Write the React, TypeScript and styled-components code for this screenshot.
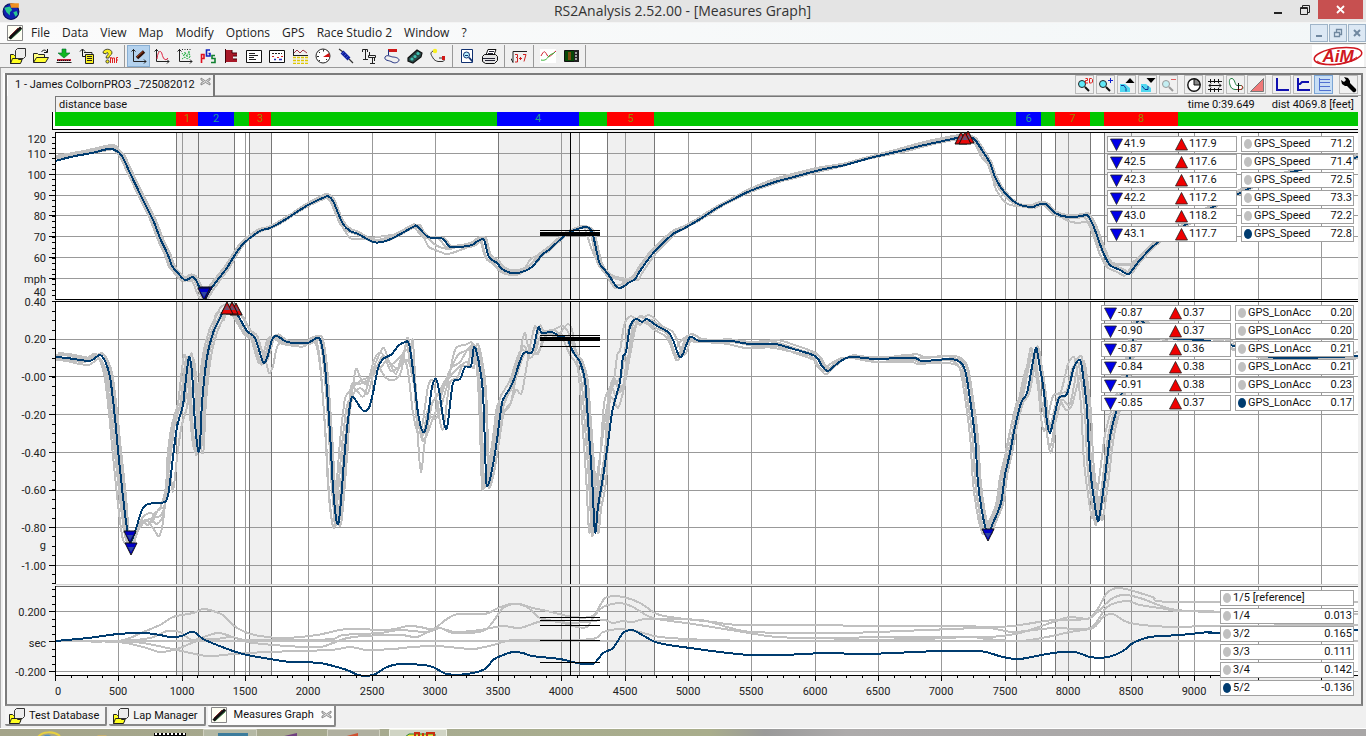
import React from "react";
import styled, { createGlobalStyle, css } from "styled-components";

const UI = `Roboto, "Liberation Sans", Arial, sans-serif`;
const SEGOE = `"Open Sans", "Noto Sans", sans-serif`;
const GREY = "#c0c0c0";
const NAVY = "#003c70";

const GlobalStyle = createGlobalStyle`
  *, *::before, *::after { box-sizing: border-box; }
  body { margin: 0; background: #f0f0f0; font: 11px/14px ${UI}; color: #111; }
  button { font: inherit; color: inherit; padding: 0; margin: 0; border: 0; background: none; }
  svg { display: block; flex: none; }
`;

/* ------------------------------------------------------------ data */

type Pt = [number, number];
const parse = (s: string): Pt[] =>
  s.trim().split(/\s+/).map((p) => p.split(",").map(Number) as Pt);

const X0 = 55;
const SPAN = 1303;
const pct = (x: number) => `${((x - X0) / SPAN) * 100}%`;

const speed = parse(`55,161 75,156 92,153 108,149 115,150 122,156 130,173 143,200 153,220 160,238 168,255
 172,266 177,272 185,280 193,277 197,282 202,294 205,298 210,290 223,273 227,268 233,258 243,244 260,231
 270,228 283,221 308,205 325,197 328,196 333,201 338,213 343,224 350,231 358,234 373,242 382,242 393,238
 413,227 417,226 428,237 441,238 445,241 450,247 460,247 472,245 478,241 484,240 489,257 497,263 502,269
 512,273 522,272 532,267 542,255 550,249 563,237 570,232 585,227 590,229 593,235 597,253 600,264 608,274
 617,287 623,287 628,283 635,279 640,271 650,257 657,249 673,234 683,229 697,221 717,208 730,201 750,191
 775,182 790,178 820,170 845,165 870,158 900,151 920,146 943,141 963,137 973,138 978,144 990,163 995,177
 1005,193 1018,204 1033,207 1037,205 1046,204 1055,213 1068,217 1082,216 1087,215 1093,225 1103,252
 1110,265 1120,270 1127,274 1130,273 1140,260 1158,242 1187,224 1213,207 1238,194 1267,180 1300,170 1358,157`);

const accel = parse(`55,357 67,358 80,360 90,361 95,358 100,355 105,361 110,377 115,418 118,450 123,497 128,535
 131,542 135,532 142,510 148,504 160,503 166,501 169,490 173,457 177,427 183,405 185,387 189,357 192,373
 195,423 198,450 200,445 202,403 207,357 213,333 220,318 224,310 230,307 237,314 247,331 255,338 263,362
 267,358 272,340 277,336 287,342 300,343 308,343 317,338 321,342 325,367 330,433 333,487 337,523 340,512
 345,449 350,405 353,397 360,407 364,411 369,408 373,393 378,368 383,359 392,354 398,346 405,342 409,344
 413,370 418,413 423,432 427,423 432,387 436,379 439,390 443,417 446,429 448,422 453,383 460,379 465,367
 471,366 474,347 478,358 483,393 486,477 488,485 492,470 497,440 502,403 507,393 513,382 523,354 532,352
 537,332 539,327 542,333 552,332 560,337 567,338 570,345 575,355 580,362 585,380 588,420 592,477 595,532
 598,507 603,477 607,450 612,413 617,393 620,382 623,357 626,352 630,327 636,319 642,322 647,319 657,326
 668,332 673,340 679,356 683,354 690,337 700,341 730,341 750,344 775,344 790,348 815,356 822,366 828,371
 838,363 850,357 875,359 900,358 915,358 923,361 950,359 960,362 965,370 969,392 975,437 978,483 983,517
 988,534 993,523 1001,503 1005,475 1010,453 1015,427 1021,403 1027,393 1032,367 1036,348 1039,362 1044,392
 1047,422 1050,433 1053,422 1059,398 1067,394 1074,367 1080,360 1083,375 1087,410 1090,467 1097,518
 1100,513 1105,477 1110,437 1116,412 1127,375 1137,322 1150,328 1170,338 1200,340 1230,345 1270,357
 1300,358 1358,356`);

const deltaNavy = parse(`55,641 88,638 118,634 143,633 160,635 170,637 182,636 190,632 196,633 203,639 217,645
 233,651 247,655 270,659 290,662 320,663 347,670 358,675 373,675 387,667 400,664 423,665 433,667 447,674
 467,674 485,669 493,660 503,655 513,652 523,653 532,656 560,659 577,663 593,664 603,653 613,648 623,633
 630,630 635,631 653,641 663,644 690,648 720,652 750,655 783,655 827,653 867,654 940,651 980,651 1003,657
 1020,659 1053,653 1075,652 1090,657 1108,657 1123,651 1133,643 1150,637 1180,635 1210,632 1220,633 1358,630`);

const deltaGrey = [
  `55,641 118,641 143,632 160,625 173,617 193,613 203,609 213,611 223,615 233,625 245,632 260,636 283,638
   317,635 347,629 387,630 408,626 420,627 433,629 447,619 458,614 485,614 498,608 510,604 520,604 533,608
   547,611 573,617 593,616 602,602 607,597 623,597 640,603 657,614 677,618 713,622 740,625 827,625 860,626
   960,626 987,627 1013,626 1053,620 1087,619 1097,610 1107,593 1117,588 1130,590 1153,597 1173,602 1358,602`,
  `55,641 118,641 150,638 167,631 180,632 193,640 217,633 233,637 247,640 300,640 333,639 343,635 380,633
   400,630 427,632 440,628 453,633 485,630 503,608 515,604 527,607 540,618 560,622 577,627 587,627 593,618
   603,607 620,603 633,607 653,618 693,624 743,632 777,637 827,638 893,637 987,637 1020,633 1053,622
   1070,617 1090,618 1110,600 1123,595 1140,598 1167,608 1187,611 1220,612 1358,614`,
  `55,641 118,642 143,647 160,652 177,649 200,640 217,639 233,637 247,642 287,646 320,647 333,643 353,637
   400,635 417,637 437,628 455,632 480,630 503,626 520,628 543,621 573,623 603,620 613,623 623,621 633,622
   647,619 700,620 727,627 753,632 843,633 927,630 987,628 1013,632 1053,628 1090,628 1107,607 1127,601
   1140,605 1167,609 1187,611 1358,614`,
  `55,641 118,641 143,643 177,650 207,656 233,654 267,652 330,650 350,647 367,650 393,649 413,647 437,646
   470,649 480,648 493,645 513,640 553,640 593,639 603,632 620,629 640,632 660,637 710,640 793,641 920,639
   970,637 987,639 1020,641 1047,637 1070,632 1093,628 1103,617 1113,614 1130,623 1173,627 1210,626 1358,625`,
  `55,641 1358,641`,
].map(parse);

/* Shift a trace along x and y, with a slow wobble so laps drift apart. */
const drift = (base: Pt[], dx: number, dy: number, seed: number, amp: number): Pt[] =>
  base.map(([x, y]) => [
    x + dx * (0.7 + 0.3 * Math.sin(x / 37 + seed)),
    y + dy + amp * Math.sin(x / 23 + seed * 2),
  ]);

/* Replace the stretches of a trace that a lap drove differently. */
const patch = (base: Pt[], ...parts: string[]): Pt[] =>
  parts.reduce((acc, s) => {
    const p = parse(s);
    const a = p[0][0] - 2;
    const b = p[p.length - 1][0] + 2;
    return [...acc.filter(([x]) => x < a), ...p, ...acc.filter(([x]) => x > b)];
  }, base);

const speedGrey = [
  patch(drift(speed, -3, 0, 0, 1), "50,157 80,152 112,145 120,152 128,172", "424,238 429,247 438,251 447,254 458,251",
    "586,232 592,250 598,262 608,275 617,279 626,281 636,279", "1110,262 1120,264 1130,264 1138,258"),
  patch(drift(speed, 2, -1, 1, 1), "50,158 80,154 113,147 121,154", "610,274 620,278 628,280", "1110,264 1122,265 1132,265"),
  patch(drift(speed, -4, 1, 2, 1), "50,159 82,153 109,147 116,152", "350,238 360,239 372,238 384,236 398,234",
    "525,268 530,260 536,256 548,252", "975,144 982,158 990,166 995,187 1003,200 1010,205 1020,206"),
  patch(drift(speed, 3, 0, 3, 1), "50,159 80,155 114,149", "424,232 434,244 448,249 460,246", "620,278 630,279"),
  patch(drift(speed, -2, -2, 4, 1), "50,157 84,151 114,146", "1066,220 1078,223 1088,222 1094,234 1100,254 1108,265"),
];

const accelGrey = [
  patch(drift(accel, -5, 2, 0, 2), "130,545 138,529 146,520 153,528 159,536 163,522 168,470 175,414",
    "214,325 216,314 221,313 224,320", "352,392 356,369 361,379 366,384 372,372 383,348 390,364 397,360 404,352",
    "414,382 418,440 421,473 425,440 430,418 437,417 447,386 455,350 465,345 474,346",
    "502,413 510,405 515,382 524,334 528,346 533,354 538,352 544,340", "600,460 604,404 610,388 617,382 622,372",
    "1045,420 1050,452 1054,440 1058,400 1066,410 1072,405 1078,382"),
  patch(drift(accel, 3, -2, 1, 2), "130,545 140,527 150,519 157,524 164,512 170,460 177,412",
    "258,342 265,358 269,373 273,366 278,345", "352,398 360,388 368,393 376,366 386,378 394,380 401,372 407,338 411,352",
    "414,376 420,430 424,441 432,421 440,400 450,370 460,362 470,347",
    "504,412 510,404 516,390 522,392 530,350 538,354 544,338 562,326 570,336", "610,400 618,408 624,388 632,345 638,318",
    "670,338 674,350 682,340 692,334 704,340"),
  patch(drift(accel, -3, 1, 2, 3), "130,546 140,522 148,525 154,514 160,508 166,487 172,440",
    "352,384 360,384 370,378 378,364 384,356 391,371 400,366 406,360 410,365",
    "415,390 422,436 428,410 438,394 448,375 458,355 468,350", "505,402 512,380 523,346 530,358 536,350",
    "608,398 614,378 620,392 626,372", "1020,395 1025,372 1032,360 1036,362 1041,400"),
  patch(drift(accel, 4, 0, 3, 2), "131,548 141,520 150,513 158,517 164,509 170,475", "352,390 364,396 374,360 381,353 392,365 399,368 405,350 410,352",
    "418,420 425,439 432,404 442,390 452,374 466,362", "610,390 616,396 621,386", "1046,424 1050,447 1056,420 1062,400 1070,404"),
  patch(drift(accel, -6, -1, 4, 2), "130,540 138,526 145,520 152,522 158,510 165,503", "354,386 362,380 372,376 382,366 388,360 396,374 402,356",
    "553,335 560,333 568,324 573,334"),
];

/* Catmull-Rom spline through the samples. */
const spline = (p: Pt[]) => {
  let d = `M${p[0][0]} ${p[0][1]}`;
  for (let i = 0; i < p.length - 1; i++) {
    const a = p[i - 1] || p[i];
    const b = p[i];
    const c = p[i + 1];
    const e = p[i + 2] || c;
    const n = (v: number) => v.toFixed(1);
    d += `C${n(b[0] + (c[0] - a[0]) / 7)} ${n(b[1] + (c[1] - a[1]) / 7)} ${n(c[0] - (e[0] - b[0]) / 7)} ${n(
      c[1] - (e[1] - b[1]) / 7
    )} ${c[0]} ${c[1]}`;
  }
  return d;
};

const bands: Pt[] = [[176, 198], [198, 234], [249, 271], [498, 579], [607, 654], [1016, 1041], [1055, 1090], [1104, 1178]];
const gridX = Array.from({ length: 20 }, (_, i) => Math.round(X0 + (i + 1) * 63.3));

const segments: { w: number; kind: "g" | "r" | "b"; n?: number }[] = [
  { w: 121, kind: "g" }, { w: 22, kind: "r", n: 1 }, { w: 36, kind: "b", n: 2 }, { w: 15, kind: "g" },
  { w: 22, kind: "r", n: 3 }, { w: 226, kind: "g" }, { w: 82, kind: "b", n: 4 }, { w: 28, kind: "g" },
  { w: 47, kind: "r", n: 5 }, { w: 362, kind: "g" }, { w: 25, kind: "b", n: 6 }, { w: 14, kind: "g" },
  { w: 35, kind: "r", n: 7 }, { w: 14, kind: "g" }, { w: 74, kind: "r", n: 8 }, { w: 180, kind: "g" },
];

/* ------------------------------------------------------------ icons */

const Icon = ({ children, w = 16, h = 16, box = "0 0 16 16" }: { children: React.ReactNode; w?: number; h?: number; box?: string }) => (
  <svg width={w} height={h} viewBox={box} fill="none" aria-hidden="true">{children}</svg>
);

const Pages = () => (
  <Icon>
    <path d="M.5 6.500h3l1 1h7v6l-2 2h-9z" fill="#ffff20" stroke="#222" />
    <path d="M5.500 2.500l2-2h8v8l-2 2h-8z" fill="#ececec" stroke="#333" />
    <path d="M.5 15.500l2-5h5l1 1h3l1-1-2 5z" fill="#ffff20" stroke="#222" />
  </Icon>
);

const Pen = () => (
  <Icon>
    <path d="M.5 .5h15v15H.5z" fill="#fffff4" stroke="#888" />
    <path d="M4 14L14.500 4.500" stroke="#3a9a4a" />
    <path d="M3 11L11 3" stroke="#a33" />
    <path d="M3.500 12.500L13 3.500" stroke="#111" strokeWidth="3" strokeLinecap="square" />
  </Icon>
);

const axes = <path d="M2.500 1v12.500H15M.5 3.500l2-2 2 2M13 11.500l2 2-2 2" stroke="#222" />;

const toolIcons: Record<string, React.ReactNode> = {
  "Open pages": <Pages />,
  "Open folder": (
    <Icon><path d="M.5 14.500v-9h4l1 1h6v3" fill="#ffff80" stroke="#222" /><path d="M.5 14.500l3-5h12l-3 5z" fill="#ffff30" stroke="#222" /><path d="M8.500 4c1-2 4-3 5.500 0M14.500 1v3.500H11" stroke="#111" /></Icon>
  ),
  Download: (
    <Icon><path d="M6 1h4v4h4L8 10 2 5h4z" fill="#10b820" stroke="#063" strokeWidth=".6" /><path d="M1 11h14v2H1z" fill="#c02038" /><path d="M1 12.500h14" stroke="#111" strokeDasharray="1 1" /><path d="M.5 14.500h15" stroke="#222" /></Icon>
  ),
  Export: (
    <Icon><path d="M3.500 1.500v7H6M1 3.500l2.500-2.500L6 3.500" stroke="#111" /><path d="M6.500 6.500h8v9h-8z" fill="#f8f020" stroke="#222" /><path d="M8 8.500h5M8 10.500h5M8 12.500h5" stroke="#222" /><path d="M5 4.500h8v2" stroke="#222" /></Icon>
  ),
  "Data export": (
    <Icon><path d="M1 5c0-5 9-5 9 0 0 2-3 2-3 5H4c0-3 3-3 2-5-1-1-2 0-2 1z" fill="#f8f020" stroke="#222" strokeWidth=".8" /><circle cx="5.500" cy="13.500" r="1.600" fill="#f8f020" stroke="#222" strokeWidth=".8" /><path d="M8.500 15V9.500h1l1 2M10.500 15v-5h2v5M14.500 15V9.500H16M14.500 12H16" stroke="#e02020" /></Icon>
  ),
  "Measures graph": (
    <Icon>{axes}<path d="M6 10L13 3.500" stroke="#301008" strokeWidth="3.400" /><path d="M6 9l6-5.500" stroke="#d05020" strokeWidth=".8" /></Icon>
  ),
  "X-Y graph": (
    <Icon>{axes}<path d="M3 11C4 2 7 2 8 6s3 8 6 4" stroke="#e02040" /></Icon>
  ),
  Scatter: (
    <Icon>{axes}<path d="M5 5l2 3 1-4 2 5 2-6 1 6M5 11l3-2 2 2 3-2" stroke="#20b040" strokeDasharray="1.500 .7" /><path d="M5 1.500h10" stroke="#222" strokeDasharray="1 1.500" /></Icon>
  ),
  GPS: (
    <Icon><path d="M1.500 15V6.500H4v4H1.500" stroke="#e01020" strokeWidth="1.600" /><path d="M10 2H6.500v6H10V5.500H8.500" stroke="#1020c0" strokeWidth="1.600" /><path d="M15 7.500h-3v3h3v4h-4" stroke="#108030" strokeWidth="1.600" /></Icon>
  ),
  Histogram: (
    <Icon><path d="M2 2h7v3h5v3h-4v3h4v3H2z" fill="#a81828" /><path d="M2.500 1v14M9 2v3h5M14 8h-4M10 11h4" stroke="#400008" /></Icon>
  ),
  Report: (
    <Icon><path d="M.5 2.500h15v12H.5z" fill="#fff" stroke="#111" /><path d="M3 5.500h6M3 7.500h9M3 9.500h5M3 11.500h7" stroke="#222" /></Icon>
  ),
  Chart: (
    <Icon><path d="M.5 2.500h15v12H.5z" fill="#fff" stroke="#111" /><path d="M3 5.500h10" stroke="#222" strokeDasharray="2 1" /><path d="M3 8.500h2M8 9.500h2M12 8.500h2" stroke="#d02020" /><path d="M5 11.500h2M10 11.500h3" stroke="#2030c0" strokeWidth="1.400" /></Icon>
  ),
  "Split report": (
    <Icon><path d="M1 7.500h15M1.500 1v6" stroke="#222" /><path d="M2 5l3-3 3 3 3-3 4 3" stroke="#a03040" /><path d="M1 9.500h15M1 12.500h15M1 15.500h15" stroke="#e0c800" strokeWidth="1.600" strokeDasharray="3 1" /></Icon>
  ),
  Gauge: (
    <Icon><circle cx="8" cy="8" r="7" fill="#fff" stroke="#222" /><path d="M8 9l6-4 1 4z" fill="#d01010" /><path d="M8.500 1.500v2M2 8.500h2M4 4l1 1M5 12l-1 1M12 12l-1-1" stroke="#222" /></Icon>
  ),
  Suspension: (
    <Icon><path d="M1 1l4 3M11 11l4 4" stroke="#333" strokeWidth="1.200" /><path d="M4 4l7 7" stroke="#1020a0" strokeWidth="4" /><path d="M6 4L4 6M8 6L6 8M10 8l-2 2" stroke="#5068d8" strokeWidth=".7" /></Icon>
  ),
  Channels: (
    <Icon><path d="M1.500 4V1.500h5V4M4.500 2v9M2 11.500h5M7.500 7.500h7v2h-7zM11.500 10v5M9 15.500h5M8.500 7V4M13.500 10v3" stroke="#222" /></Icon>
  ),
  Track: (
    <Icon><path d="M4 1h9v3H4z" fill="#d01818" /><path d="M4.500 2v5M1 9c2-3 6 0 8 0s6 1 6 3-4 4-7 2-8-1-7-5z" stroke="#203080" /></Icon>
  ),
  Traffic: (
    <Icon><path d="M1 10l9-8 5 3-1 4-8 6-5-2z" fill="#2a4a48" stroke="#111" strokeWidth="1.200" /><circle cx="5" cy="11" r="1.600" fill="#40c0b0" /><circle cx="8" cy="8.500" r="1.600" fill="#40c0b0" /><circle cx="11" cy="5.500" r="1.600" fill="#40c0b0" /></Icon>
  ),
  Map: (
    <Icon><path d="M3 3c-4 2-1 5 0 7s3 3 5 3.500h4c3 0 3-3 0-3.500H9" stroke="#333" /><circle cx="5" cy="3" r="2.200" fill="#f8f020" /><path d="M12 8h3v4h-3z" fill="#d01818" /></Icon>
  ),
  "Print preview": (
    <Icon><path d="M2.500 1.500h11v13h-11z" fill="#fff" stroke="#103070" /><circle cx="7.500" cy="7" r="3" fill="#b8f0ff" stroke="#103070" /><path d="M10 9.500l3.500 4" stroke="#103070" strokeWidth="1.800" /><path d="M6 7.500h3" stroke="#103070" /></Icon>
  ),
  Print: (
    <Icon><path d="M4 7l2-5.500h8L12 7z" fill="#fff" stroke="#111" /><path d="M.5 8.500l2-2h11l2 2v4l-3 3h-9l-3-2z" fill="#e4e4e4" stroke="#111" /><path d="M1 10.500h12M3 12.500h10M7 3.500h5M6 5.500h5" stroke="#223" /></Icon>
  ),
  "Math channels": (
    <Icon><path d="M0 10.500l2 4V3.500h14" stroke="#222" /><path d="M4 6.500h2.500v3H5M6.500 10v4H4M8 10.500h3M9.500 9v3M12 6.500h3l-2 7" stroke="#d02020" /></Icon>
  ),
  "Colour lines": (
    <Icon><path d="M0 1h16v14H0z" fill="#fff" /><path d="M1 8c3-6 4-5 6-1s5-1 9-4" stroke="#d02030" /><path d="M1 12c4 1 6-1 8-4s4-1 6-4" stroke="#30b030" /></Icon>
  ),
  Logger: (
    <Icon><path d="M1.500 2.500h14v11h-14z" fill="#084808" stroke="#111" /><path d="M5 4h3v8H5z" fill="#7a4a10" /><path d="M11 2h5v12h-5z" fill="#222" /><path d="M12 5h2M12 8h2M12 11h2" stroke="#ccc" strokeWidth="1.600" /></Icon>
  ),
};

const toolGroups = [
  ["Open pages", "Open folder", "Download", "Export", "Data export"],
  ["Measures graph", "X-Y graph", "Scatter", "GPS", "Histogram", "Report", "Chart", "Split report", "Gauge", "Suspension", "Channels", "Track", "Traffic", "Map"],
  ["Print preview", "Print"],
  ["Math channels"],
  ["Colour lines", "Logger"],
];

const Lens = ({ children, dim }: { children?: React.ReactNode; dim?: boolean }) => (
  <Icon>
    <circle cx="5" cy="7" r="3.500" fill={dim ? "#c4eef2" : "#60e8f8"} stroke={dim ? "#999" : "#222"} />
    <path d="M8 10l4 4" stroke={dim ? "#999" : "#111"} strokeWidth="2" />
    {children}
  </Icon>
);

const viewGroups: [string, React.ReactNode][][] = [
  [
    ["Zoom 2D", <Lens><path d="M8.500 1.500h2v2h-2v2.500H11M12.500 1.500v4.500h2l1-1V2.500l-1-1z" stroke="#e02020" /></Lens>],
    ["Zoom in", <Lens><path d="M12.500 1v5M10 3.500h5" stroke="#1020d0" /></Lens>],
    ["Scale up", <Icon><path d="M1 7h5l5 4v4H1z" fill="#50d8f0" /><path d="M2 8.500h3l2 3v3" stroke="#103090" /><path d="M11 1l4.500 5h-9z" fill="#000" /></Icon>],
    ["Scale down", <Icon><path d="M1 7h5l5 4v4H1z" fill="#50d8f0" /><path d="M2 9l3 3.500h3V9" stroke="#103090" /><path d="M11 6l4.500-5h-9z" fill="#000" /></Icon>],
    ["Zoom out", <Lens dim><path d="M10 2.500h5" stroke="#e06060" /></Lens>],
  ],
  [
    ["Time base", <Icon><circle cx="8" cy="8" r="6.200" fill="#fff" stroke="#111" strokeWidth="1.400" /><path d="M8 8V2a6 6 0 0 1 6 6z" fill="#888" stroke="#111" /></Icon>],
    ["Distance base", <Icon><path d="M1 4.500h14M1 12.500h14M3.500 2v4M7.500 2v4M11.500 2v4M3.500 11v4M7.500 11v4M11.500 11v4M2 8.500h12M4 6.500l-2 2 2 2M12 6.500l2 2-2 2" stroke="#111" /></Icon>],
    ["Track map", <Icon><path d="M4 1.500C1 1 1 5 2 8s2 4 5 4.500h6c3 0 2-4 0-4H9C7 8.500 7 2 4 1.500z" stroke="#208040" fill="#fff" /><path d="M9 12.500h4c2-1 2-4 0-4" stroke="#c02020" /><path d="M10.500 6v9" stroke="#111" /></Icon>],
    ["Gradient", <Icon><path d="M1.500 14.500l13-13v13z" fill="#f07878" stroke="#777" /></Icon>],
  ],
  [
    ["Overlay", <Icon><path d="M3 1v12h12" stroke="#1010b0" strokeWidth="2" /></Icon>],
    ["Tiled", <Icon><path d="M3 1v12h12M3 7h2l2-2h7" stroke="#1010b0" strokeWidth="2" /></Icon>],
    ["Stacked", <Icon><path d="M3.500 1v12.500H15M4 9.500h10M4 5.500h10M4 2.500h10" stroke="#5070d0" /></Icon>],
  ],
  [["Settings", <Icon><path d="M3 0l4 1 2 3v2l6 6c1 2-1 4-3 3L6 9H4L1 7 0 3l3 2 2-2z" fill="#000" /></Icon>]],
];

/* ------------------------------------------------------------ window chrome */

const Window = styled.div`display: flex; flex-direction: column; min-height: 100vh;`;

const TitleBar = styled.header`
  display: grid; grid-template-columns: 1fr auto 1fr; align-items: center;
  height: 22px; background: #e4e4e4; padding: 0 3px 0 2px;
`;
const Title = styled.h1`margin: 0; font: 400 14px/22px ${SEGOE}; color: #333;`;
const WindowControls = styled.div`display: flex; justify-content: flex-end; align-self: start; height: 19px;`;
const CaptionButton = styled.button<{ $close?: boolean }>`
  display: flex; align-items: center; justify-content: center;
  width: ${(p) => (p.$close ? 45 : 27)}px; background: ${(p) => (p.$close ? "#c75050" : "transparent")};
`;

const MenuBar = styled.nav`
  display: flex; align-items: center; height: 22px; padding: 0 0 0 7px;
  background: linear-gradient(90deg, #fbfbfb, #f3f7f8); border-top: 1px solid #f4f4f4; border-bottom: 1px solid #999;
`;
const MenuList = styled.div`display: flex; flex: 1; gap: 12px; padding-left: 8px;`;
const MenuItem = styled.button`font: 12px/20px ${SEGOE}; color: #222;`;
const MdiButton = styled.button`
  display: flex; align-items: center; justify-content: center; width: 18px; height: 18px; margin-left: 1px;
  background: #dce8f4; border: 1px solid #9fb4c8;
`;

const ToolBar = styled.div`
  display: flex; align-items: center; height: 24px; padding-left: 6px; border-bottom: 1px solid #999;
`;
const ToolGroup = styled.div`
  display: flex; height: 22px; padding-right: 3px; margin-right: 2px; border-right: 1px solid #999;
`;
const ToolButton = styled.button<{ $active?: boolean }>`
  display: flex; align-items: center; justify-content: center; width: 23px; height: 22px; border: 1px solid transparent;
  ${(p) => p.$active && css`background: #b4d2ee; border-color: #88aed2;`}
`;
const Brand = styled.div`margin-left: auto; padding-right: 2px;`;

/* ------------------------------------------------------------ document */

const Workspace = styled.main`flex: 1; padding: 5px 3px 0 2px; background: #f0f0f0; border-left: 1px solid #aaa;`;
const Frame = styled.section`
  margin-left: 2px; border: 2px solid #7c7c7c; border-bottom-color: #8c8c8c; background: #f0f0f0;
  box-shadow: -2px 0 0 #fff;
`;
const DocumentBar = styled.div`
  display: flex; align-items: stretch; justify-content: space-between; height: 21px; padding-right: 3px;
  border-bottom: 1px solid #aaa;
`;
const DocumentTab = styled.button`
  display: flex; align-items: flex-start; gap: 5px; height: 21px; padding: 3px 2px 0 7px;
  background: #f0f0f0; border-right: 2px solid #777; border-left: 1px solid #fff;
`;
const CloseMark = styled.span`display: flex; margin-top: -1px;`;
const ViewTools = styled.div`display: flex; gap: 6px;`;
const ViewGroup = styled.div`display: flex; gap: 2px;`;
const ViewButton = styled.button<{ $active?: boolean }>`
  display: flex; align-items: center; justify-content: center; width: 19px; height: 19px; border: 1px solid #bbb;
  ${(p) => p.$active && css`background: #c8def4; border-color: #7aa4d4;`}
`;

const InfoBar = styled.div`
  display: flex; justify-content: space-between; height: 16px; margin: 0 3px 0 48px; padding: 0 4px 0 3px;
  border-top: 1px solid #777; border-left: 1px solid #777; line-height: 15px;
`;
const Readings = styled.span`display: flex; gap: 17px;`;

const SegmentFrame = styled.div`
  margin: 0 3px 2px 45px; padding: 0 0 3px 2px; background: #fff;
  border-left: 1px solid #000; border-bottom: 1px solid #000;
`;
const SegmentStrip = styled.div`display: flex; height: 14px;`;
const segmentColour = { g: "#00c800", r: "#ff0000", b: "#0000ff" };
const Segment = styled.div<{ $w: number; $kind: "g" | "r" | "b" }>`
  flex: ${(p) => p.$w} 0 0; text-align: center; line-height: 13px; font-size: 11px;
  background: ${(p) => segmentColour[p.$kind]}; color: ${(p) => (p.$kind === "r" ? "#9a8a00" : "#209c90")};
`;

/* ------------------------------------------------------------ plots */

const PlotRow = styled.div<{ $h: number }>`
  display: grid; grid-template-columns: 48px 1fr; height: ${(p) => p.$h}px; margin-right: 3px;
`;
const Gutter = styled.svg`overflow: visible;`;
const PlotArea = styled.div`position: relative; min-width: 0;`;
const PlotSvg = styled.svg`width: 100%; height: 100%; overflow: visible;`;

const Marker = ({ x, y, up }: { x: number; y: number; up?: boolean }) => (
  <svg x={pct(x)} y={y} overflow="visible">
    <path d={up ? "M0 0L6 12H-6z" : "M-6 0H6L0 12z"} fill={up ? "#e80808" : "#0000c8"} stroke="#111" />
    <path d={up ? "M0 3L3 8H-3z" : "M-3 4H3L0 9z"} fill={up ? "#705070" : "#30489c"} />
  </svg>
);

type PlotProps = {
  top: number;
  height: number;
  floor: number;
  lines: number[];
  minor: number;
  labels: [string, number][];
  grey: Pt[][];
  navy: Pt[];
  cursor: [number, number][];
  markers?: { x: number; y: number; up?: boolean }[];
  edge?: string;
  axis?: boolean;
  children?: React.ReactNode;
};

const Plot = ({ top, height, floor, lines, minor, labels, grey, navy, cursor, markers = [], edge = "#000", axis, children }: PlotProps) => {
  const ticks: number[] = [];
  for (let y = lines[0]; y < floor; y += minor) ticks.push(Math.round(y));
  for (let y = lines[0] - minor; y > top; y -= minor) ticks.push(Math.round(y));
  return (
    <PlotRow $h={height}>
      <Gutter width="48" height={height} aria-hidden="true" shapeRendering="crispEdges">
        {ticks.map((y) => <path key={y} d={`M45 ${y - top + 0.5}H48`} stroke="#000" />)}
        {lines.map((y) => <path key={y} d={`M42 ${y - top + 0.5}H48`} stroke="#000" />)}
        {labels.map(([t, y]) => (
          <text key={t} x={39} y={y - top + 4} textAnchor="end" fontSize="11" fill="#222">{t}</text>
        ))}
      </Gutter>
      <PlotArea>
        <PlotSvg role="img" aria-label="Lap traces">
          <svg width="100%" height={height} viewBox={`${X0} ${top} ${SPAN} ${height}`} preserveAspectRatio="none" shapeRendering="crispEdges">
            <rect x={X0} y={top} width={SPAN} height={floor - top} fill="#fff" />
            {bands.map(([a, b]) => <rect key={a} x={a} y={top} width={b - a} height={floor - top} fill="#f0f0f0" />)}
            {gridX.map((x) => <path key={x} d={`M${x + 0.5} ${top}V${floor}`} stroke="#999" />)}
            {lines.map((y) => <path key={y} d={`M${X0} ${y + 0.5}H${X0 + SPAN}`} stroke="#999" />)}
            {bands.flat().map((x, i) => <path key={i} d={`M${x + 0.5} ${top}V${floor}`} stroke="#777" />)}
            {grey.map((g, i) => <path key={i} d={spline(g)} fill="none" stroke={GREY} strokeWidth="2" />)}
            <path d={spline(navy)} fill="none" stroke={NAVY} strokeWidth="2" />
            {cursor.map(([y, w]) => <rect key={y} x={540} y={y} width={60} height={w} fill="#000" />)}
            <path d={`M570.5 ${top}V${floor}`} stroke="#000" />
            <path d={`M${X0} ${top + 0.5}H${X0 + SPAN}`} stroke={edge} />
            <path d={`M${X0 + 0.5} ${top}V${floor}`} stroke="#000" />
            {axis ? (
              <path d={`M${X0} ${floor + 0.5}H${X0 + SPAN}`} stroke="#000" />
            ) : (
              <path d={`M${X0} ${floor - 0.5}H${X0 + SPAN}`} stroke={floor === 585 ? "#d4d4d4" : "#000"} />
            )}
            {axis &&
              Array.from({ length: 82 }, (_, i) => {
                const x = Math.round(X0 + i * 15.825) + 0.5;
                return <path key={i} d={`M${x} ${floor}v${i % 4 ? 3 : 6}`} stroke="#000" />;
              })}
          </svg>
          {markers.map((m, i) => <Marker key={i} x={m.x} y={m.y - top} up={m.up} />)}
          {axis &&
            [0, ...gridX.slice(0, 18)].map((x, i) => (
              <text key={i} x={i ? pct(x) : 3} y={109} textAnchor="middle" fontSize="11" fill="#222">{i * 500}</text>
            ))}
        </PlotSvg>
        {children}
      </PlotArea>
    </PlotRow>
  );
};

const Legend = styled.div<{ $cols: string }>`
  position: absolute; top: 4px; right: 4px; display: grid; grid-template-columns: ${(p) => p.$cols};
  grid-auto-rows: 16px; gap: 2px 4px;
`;
const Cell = styled.div`
  display: flex; align-items: center; background: #fff; border: 1px solid #a0a0a0; padding: 0 1px 0 2px; line-height: 14px;
`;
const Extreme = styled.span`display: flex; align-items: center; flex: 0 0 65px; gap: 1px;`;
const Dot = styled.i<{ $on?: boolean }>`
  width: 8px; height: 10px; border-radius: 50%; margin-right: 2px; background: ${(p) => (p.$on ? NAVY : GREY)};
`;
const Amount = styled.span`margin-left: auto;`;

const Tri = ({ up }: { up?: boolean }) => (
  <svg width="13" height="13" viewBox="0 0 13 13" aria-hidden="true">
    <path d={up ? "M6.500 .5L12.500 12H.5z" : "M.5 1H12.500L6.500 12.500z"} fill={up ? "#f00000" : "#0000e8"} stroke="#222" strokeWidth=".8" />
  </svg>
);

const MinMax = ({ name, rows, cols }: { name: string; cols: string; rows: [string, string, string][] }) => (
  <Legend $cols={cols}>
    {rows.map(([lo, hi, now], i) => (
      <React.Fragment key={i}>
        <Cell>
          <Extreme><Tri />{lo}</Extreme>
          <Extreme><Tri up />{hi}</Extreme>
        </Cell>
        <Cell><Dot $on={i === 5} />{name}<Amount>{now}</Amount></Cell>
      </React.Fragment>
    ))}
  </Legend>
);

/* ------------------------------------------------------------ footer */

const WindowTabs = styled.div`display: flex; align-items: flex-start; gap: 2px; height: 22px; padding-left: 2px;`;
const WindowTab = styled.button<{ $active?: boolean }>`
  display: flex; align-items: center; gap: 4px; height: 19px; margin-top: 1px; padding: 0 6px 0 4px; background: #f4f4f4;
  border: 1px solid #888; border-width: 0 2px 2px 0; border-radius: 0 0 2px 2px;
  ${(p) => p.$active && css`height: 21px; margin-top: 0; background: #fcfcfc; padding: 0 2px 2px 3px; gap: 7px;`}
`;

const TaskBar = styled.footer`
  display: flex; height: 8px; overflow: hidden; border-top: 1px solid #fff;
  background: linear-gradient(90deg, #a4a48a 0, #a8ac90 35%, #a9ad8c 52%, #9a9a9a 56%, #adabab 62%, #a8a6a6 100%);
`;

const Cross = () => (
  <svg width="11" height="9" viewBox="0 0 11 9" aria-hidden="true">
    <path d="M1 1l4.500 3L10 1v2L7.500 4.500 10 6v2L5.500 5.500 1 8V6l2.500-1.500L1 3z" fill="#ddd" stroke="#777" strokeWidth=".8" />
  </svg>
);

export default function App() {
  return (
    <Window>
      <GlobalStyle />
      <TitleBar>
        <Icon w={18} h={18}>
          <circle cx="8" cy="8.500" r="7" fill="#1020b0" stroke="#081060" />
          <path d="M2 5l5-1 2 3-2 2v3l-3-3zM10 9l3-1 1 3-2 2z" fill="#28c890" />
          <path d="M7 1h8v4H8z" fill="#f09020" />
        </Icon>
        <Title>RS2Analysis 2.52.00 - [Measures Graph]</Title>
        <WindowControls>
          <CaptionButton aria-label="Minimize"><Icon w={14} h={14} box="0 0 14 14"><path d="M3 10h8" stroke="#222" strokeWidth="2" /></Icon></CaptionButton>
          <CaptionButton aria-label="Restore"><Icon w={12} h={12} box="0 0 12 12"><path d="M1.500 3.500h7v7h-7zM1 4.500h8M3.500 3V1.500h7v7H9" stroke="#222" /></Icon></CaptionButton>
          <CaptionButton $close aria-label="Close"><Icon w={9} h={9} box="0 0 9 9"><path d="M1 1l7 7M8 1L1 8" stroke="#fff" strokeWidth="1.800" /></Icon></CaptionButton>
        </WindowControls>
      </TitleBar>

      <MenuBar>
        <Pen />
        <MenuList>
          {["File", "Data", "View", "Map", "Modify", "Options", "GPS", "Race Studio 2", "Window", "?"].map((m) => (
            <MenuItem key={m}>{m}</MenuItem>
          ))}
        </MenuList>
        <MdiButton aria-label="Minimize document"><Icon w={10} h={10} box="0 0 10 10"><path d="M2 8h6" stroke="#7088a0" strokeWidth="2" /></Icon></MdiButton>
        <MdiButton aria-label="Restore document"><Icon w={10} h={10} box="0 0 10 10"><path d="M1.500 4.500h5v4h-5zM3.500 4V1.500h5v5H7" stroke="#7088a0" strokeWidth="1.300" /></Icon></MdiButton>
        <MdiButton aria-label="Close document"><Icon w={10} h={10} box="0 0 10 10"><path d="M2 2l6 6M8 2L2 8" stroke="#7088a0" strokeWidth="2" /></Icon></MdiButton>
      </MenuBar>

      <ToolBar>
        {toolGroups.map((group, i) => (
          <ToolGroup key={i}>
            {group.map((name) => (
              <ToolButton key={name} aria-label={name} $active={name === "Measures graph"}>{toolIcons[name]}</ToolButton>
            ))}
          </ToolGroup>
        ))}
        <Brand>
          <svg width="52" height="22" viewBox="0 0 52 22" role="img" aria-label="AiM">
            <rect width="52" height="22" fill="#fff" />
            <ellipse cx="26" cy="11" rx="24" ry="8" fill="none" stroke="#d01820" strokeWidth="1.500" transform="rotate(-8 26 11)" />
            <path d="M5 16c8 6 28 5 40-4" fill="none" stroke="#d01820" />
            <text x="26" y="17" textAnchor="middle" fontFamily="Liberation Sans" fontSize="17" fontWeight="700" fontStyle="italic" fill="#d01820">AiM</text>
          </svg>
        </Brand>
      </ToolBar>

      <Workspace>
        <Frame>
          <DocumentBar>
            <DocumentTab>1 - James ColbornPRO3 _725082012<CloseMark><Cross /></CloseMark></DocumentTab>
            <ViewTools>
              {viewGroups.map((g, i) => (
                <ViewGroup key={i}>
                  {g.map(([name, icon]) => (
                    <ViewButton key={name} aria-label={name} $active={name === "Stacked"}>{icon}</ViewButton>
                  ))}
                </ViewGroup>
              ))}
            </ViewTools>
          </DocumentBar>
          <InfoBar>
            <span>distance base</span>
            <Readings><span>time 0:39.649</span><span>dist 4069.8 [feet]</span></Readings>
          </InfoBar>
          <SegmentFrame>
            <SegmentStrip>
              {segments.map((s, i) => <Segment key={i} $w={s.w} $kind={s.kind}>{s.n}</Segment>)}
            </SegmentStrip>
          </SegmentFrame>

          <Plot
            top={132} height={169} floor={300} minor={5.25}
            lines={[153, 174, 195, 215, 236, 257, 278]}
            labels={[["120", 139], ["110", 154], ["100", 175], ["90", 196], ["80", 216], ["70", 237], ["60", 258], ["mph", 279], ["40", 292]]}
            grey={speedGrey} navy={speed} cursor={[[230, 1], [232, 4]]}
            markers={[{ x: 206, y: 287 }, { x: 204, y: 288 }, { x: 961, y: 132, up: true }, { x: 968, y: 131, up: true }, { x: 965, y: 132, up: true }]}
          >
            <MinMax name="GPS_Speed" cols="130px 113px" rows={[
              ["41.9", "117.9", "71.2"], ["42.5", "117.6", "71.4"], ["42.3", "117.6", "72.5"],
              ["42.2", "117.2", "73.3"], ["43.0", "118.2", "72.2"], ["43.1", "117.7", "72.8"],
            ]} />
          </Plot>

          <Plot
            top={301} height={285} floor={585} minor={9.4}
            lines={[339, 376, 414, 452, 490, 527, 565]}
            labels={[["0.40", 302], ["0.20", 339], ["-0.00", 377], ["-0.20", 415], ["-0.40", 453], ["-0.60", 490], ["-0.80", 528], ["g", 545], ["-1.00", 566]]}
            grey={accelGrey} navy={accel} cursor={[[335, 1], [337, 4], [346, 1]]}
            markers={[{ x: 236, y: 303, up: true }, { x: 232, y: 302, up: true }, { x: 227, y: 302, up: true }, { x: 130, y: 531 }, { x: 131, y: 543 }, { x: 988, y: 529 }]}
          >
            <MinMax name="GPS_LonAcc" cols="130px 119px" rows={[
              ["-0.87", "0.37", "0.20"], ["-0.90", "0.37", "0.20"], ["-0.87", "0.36", "0.21"],
              ["-0.84", "0.38", "0.21"], ["-0.91", "0.38", "0.23"], ["-0.85", "0.37", "0.17"],
            ]} />
          </Plot>

          <Plot
            top={586} height={118} floor={675} minor={7.5} axis edge="#666"
            lines={[611, 641, 671]}
            labels={[["0.200", 612], ["sec", 643], ["-0.200", 672]]}
            grey={deltaGrey} navy={deltaNavy} cursor={[[617, 1], [620, 1], [625, 1], [640, 1], [662, 1]]}
          >
            <Legend $cols="134px">
              {[["1/5 [reference]", ""], ["1/4", "0.013"], ["3/2", "0.165"], ["3/3", "0.111"], ["3/4", "0.142"], ["5/2", "-0.136"]].map(([lap, v], i) => (
                <Cell key={lap}><Dot $on={i === 5} />{lap}<Amount>{v}</Amount></Cell>
              ))}
            </Legend>
          </Plot>
        </Frame>

        <WindowTabs>
          <WindowTab><Pages />Test Database</WindowTab>
          <WindowTab><Pages />Lap Manager</WindowTab>
          <WindowTab $active><Pen />Measures Graph<CloseMark><Cross /></CloseMark></WindowTab>
        </WindowTabs>
      </Workspace>

      <TaskBar>
        <svg width="460" height="8" viewBox="0 0 460 8" aria-hidden="true">
          <path d="M38 8c4-6 16-6 22-1" stroke="#e8d040" strokeWidth="2" fill="none" />
          <path d="M42 8c3-3 8-3 10 0z" fill="#5090c0" />
          <path d="M96 8l2-2h8l2 2z" fill="#c8b070" />
          <path d="M154 4h32v4h-32z" fill="#000" />
          <path d="M155 5h31" stroke="#fff" strokeWidth="2" strokeDasharray="2 2" />
          <path d="M203.500 8V.5h53V8" fill="#b4b8a4" stroke="#d0d0c0" />
          <path d="M218 4h30v4h-30z" fill="#3c7c9c" />
          <path d="M280 8l17-4v4z" fill="#704080" />
          <path d="M327.500 8V.5h52V8" fill="#b0b0a0" stroke="#d0d0c0" />
          <path d="M343 8l15-4v4z" fill="#d05030" />
          <path d="M389.500 8V.5h57V8" fill="#d0d4c4" stroke="#eef0e4" />
          <path d="M405 8l4-3h26v3z" fill="#f0e040" stroke="#208030" />
          <path d="M415 8V4h4v4M423 8V4M427 8V4h7v4" fill="none" stroke="#c83010" strokeWidth="2" />
        </svg>
      </TaskBar>
    </Window>
  );
}
